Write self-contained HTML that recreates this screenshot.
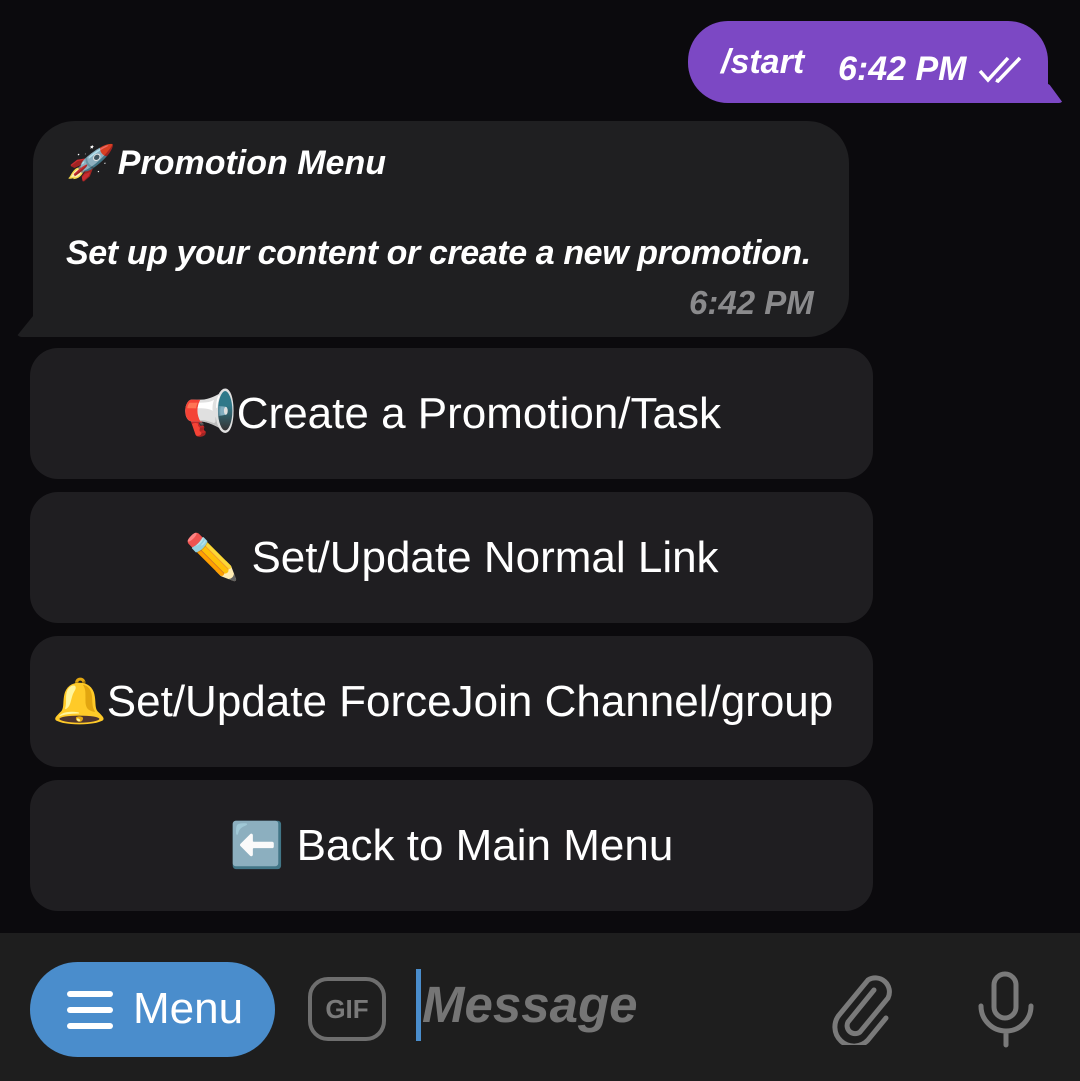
<!DOCTYPE html>
<html><head><meta charset="utf-8"><style>
*{margin:0;padding:0;box-sizing:border-box}
body{width:1080px;height:1081px;background:#0b0a0d;position:relative;overflow:hidden;font-family:"Liberation Sans",sans-serif;color:#fff}
.out{position:absolute;left:688px;top:21px;width:360px;height:82px;background:#7c48c4;border-radius:40px 40px 6px 40px}
.otail{position:absolute;left:1030px;top:73px;width:33px;height:30px;background:#7c48c4;clip-path:polygon(0 0,60% 40%,100% 100%,0 100%);border-radius:0 0 4px 0}
.out .t1{position:absolute;left:33px;top:22px;font:italic bold 34px "Liberation Sans Narrow","Liberation Sans",sans-serif}
.out .t2{position:absolute;left:150px;top:29px;font:italic bold 34px "Liberation Sans Narrow","Liberation Sans",sans-serif}
.in{position:absolute;left:33px;top:121px;width:816px;height:216px;background:#1f1f21;border-radius:42px 42px 42px 0}
.tail{position:absolute;left:16px;top:300px;width:30px;height:37px;background:#1f1f21;border-radius:0 0 0 6px;clip-path:polygon(100% 0,100% 100%,0 100%)}
.bi{font:italic bold 34px "Liberation Sans Narrow","Liberation Sans",sans-serif;position:absolute}
.btn{position:absolute;left:30px;width:843px;height:131px;background:#1f1e21;border-radius:28px;text-align:center;line-height:131px;font-size:44px;white-space:nowrap;overflow:hidden}
.bar{position:absolute;left:0;top:933px;width:1080px;height:148px;background:#1e1e1e}
.menu{position:absolute;left:30px;top:962px;width:245px;height:95px;background:#4a8dcc;border-radius:48px}
.menu span{position:absolute;left:103px;top:22px;font-size:44px}
.hb{position:absolute;left:37px;width:46px;height:6px;background:#fff;border-radius:3px}
.gif{position:absolute;left:308px;top:977px;width:78px;height:64px;border:4px solid #6e6e6e;border-radius:20px;color:#7a7a7a;font:bold 26px "Liberation Sans Narrow","Liberation Sans",sans-serif;text-align:center;line-height:56px}
</style></head><body>
<div class="otail"></div>
<div class="out"><span class="t1">/start</span><span class="t2">6:42 PM</span>
<svg style="position:absolute;left:290px;top:34px" width="50" height="28" viewBox="0 0 50 28"><path d="M2 16l8 9L30 3M18 25l2 1L42 3" stroke="#fff" stroke-width="3.5" fill="none"/></svg></div>
<div class="tail"></div>
<div class="in">
<span class="bi" style="left:33px;top:22px">🚀 Promotion Menu</span>
<span class="bi" style="left:33px;top:113px;font-size:34px;letter-spacing:-0.4px">Set up your content or create a new promotion.</span>
<span class="bi" style="left:656px;top:163px;color:#8a8a8c;font-size:33px">6:42 PM</span>
</div>
<div class="btn" style="top:348px">📢Create a Promotion/Task</div>
<div class="btn" style="top:492px">✏️ Set/Update Normal Link</div>
<div class="btn" style="top:636px;text-align:left;padding-left:22px">🔔Set/Update ForceJoin Channel/group</div>
<div class="btn" style="top:780px">⬅️ Back to Main Menu</div>
<div class="bar"></div>
<div class="menu"><div class="hb" style="top:29px"></div><div class="hb" style="top:45px"></div><div class="hb" style="top:61px"></div><span>Menu</span></div>
<div class="gif">GIF</div>
<div style="position:absolute;left:416px;top:969px;width:5px;height:72px;background:#4a8dcc"></div>
<div style="position:absolute;left:422px;top:975px;font:italic bold 51px 'Liberation Sans Narrow','Liberation Sans',sans-serif;color:#757575">Message</div>
<svg style="position:absolute;left:830px;top:970px" width="70" height="75" viewBox="0 0 70 75"><path d="M44 20L18 52a8 8 0 0 0 12 10L58 28a14 14 0 0 0-20-18L10 44a19 19 0 0 0 28 26L56 48" stroke="#7a7a7a" stroke-width="5" fill="none" stroke-linecap="round"/></svg>
<svg style="position:absolute;left:975px;top:970px" width="62" height="78" viewBox="0 0 62 78"><rect x="19" y="4" width="22" height="44" rx="11" stroke="#7a7a7a" stroke-width="5" fill="none"/><path d="M6 36a25 25 0 0 0 50 0M31 61v14" stroke="#7a7a7a" stroke-width="5" fill="none" stroke-linecap="round"/></svg>
</body></html>
